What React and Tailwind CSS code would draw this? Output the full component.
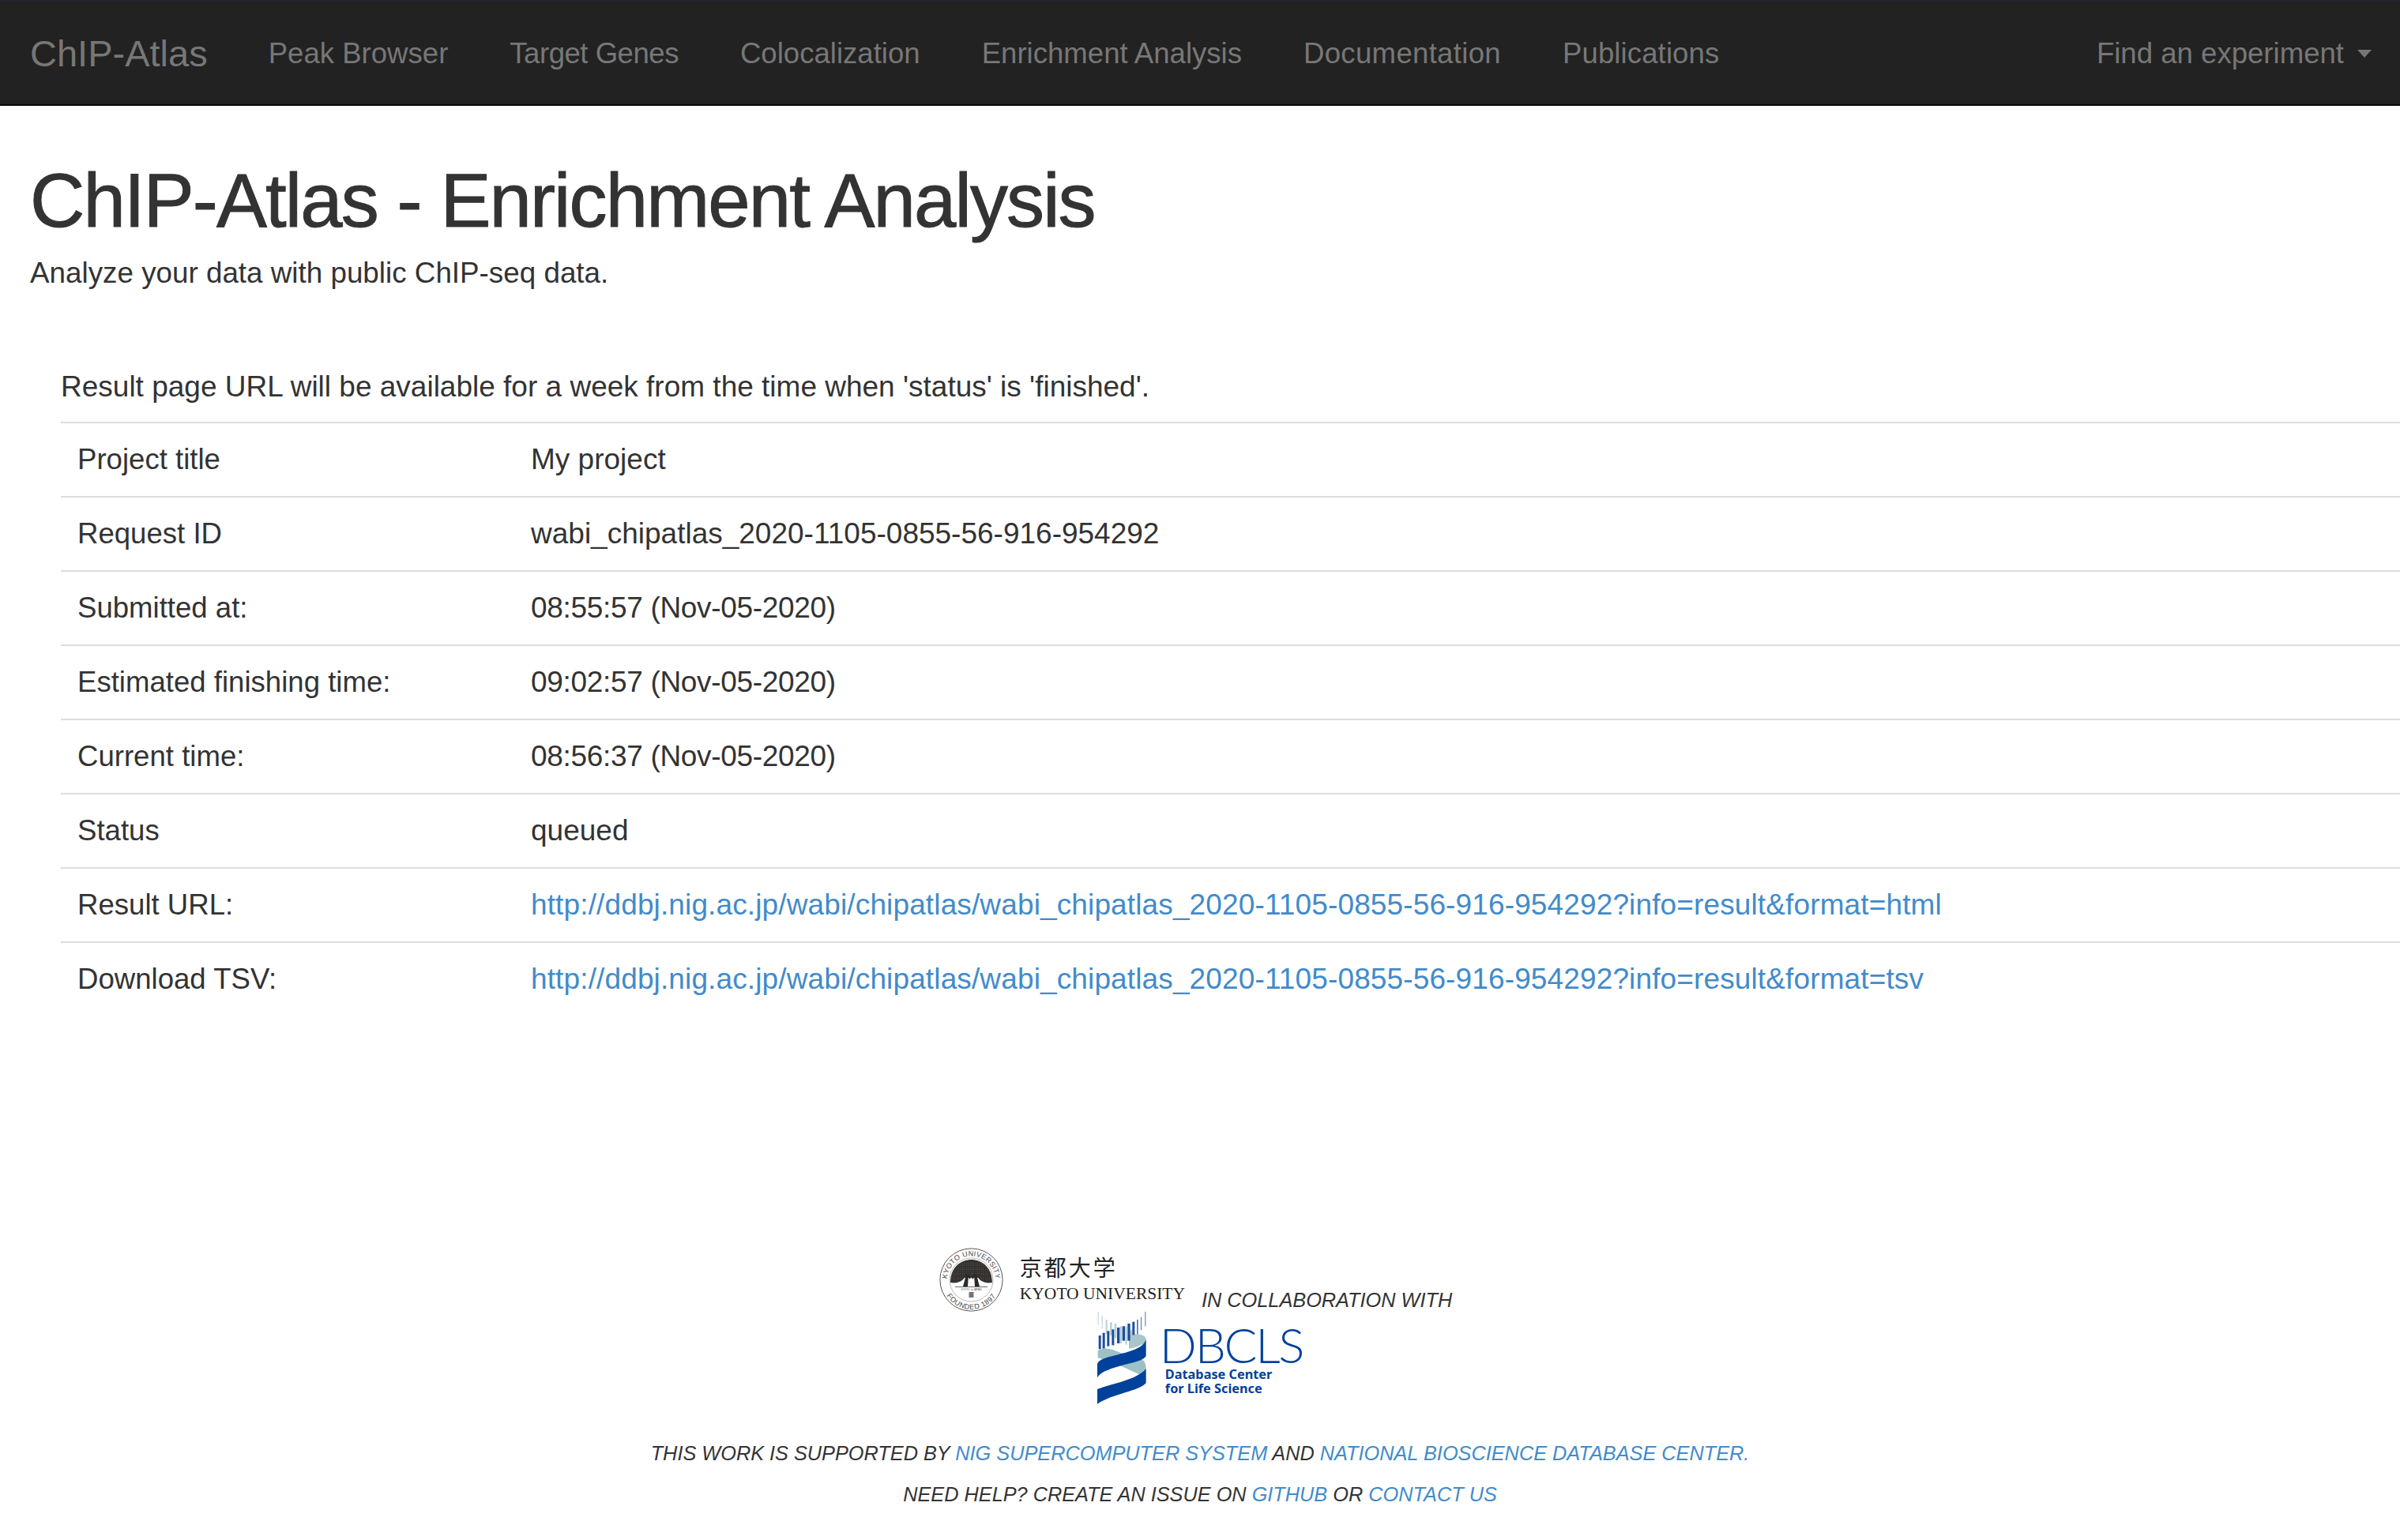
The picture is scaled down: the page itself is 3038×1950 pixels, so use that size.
const rows = [
  ["Project title", "My project"],
  ["Request ID", "wabi_chipatlas_2020-1105-0855-56-916-954292"],
  ["Submitted at:", "08:55:57 (Nov-05-2020)", "time"],
  ["Estimated finishing time:", "09:02:57 (Nov-05-2020)", "time"],
  ["Current time:", "08:56:37 (Nov-05-2020)", "time"],
  ["Status", "queued"],
  ["Result URL:", "http://ddbj.nig.ac.jp/wabi/chipatlas/wabi_chipatlas_2020-1105-0855-56-916-954292?info=result&format=html", "link"],
  ["Download TSV:", "http://ddbj.nig.ac.jp/wabi/chipatlas/wabi_chipatlas_2020-1105-0855-56-916-954292?info=result&format=tsv", "link"],
];
const navs = [
  ["Peak Browser", ""],
  ["Target Genes", "tracking-[-0.5px]"],
  ["Colocalization", ""],
  ["Enrichment Analysis", ""],
  ["Documentation", "tracking-[0.3px]"],
  ["Publications", "tracking-[0.1px]"],
];

function Seal() {
  const dots = [];
  for (let y = 18; y < 44; y += 2.4) {
    for (let x = 15; x < 67; x += 2.4) {
      dots.push(<circle key={x + "-" + y} cx={x} cy={y} r="0.3" fill="#b5b0ad" />);
    }
  }
  return (
    <svg width="81" height="81" viewBox="0 0 81 81" className="shrink-0">
      <defs>
        <path id="sealTop" d="M14 56 A30.5 30.5 0 1 1 67 56" />
        <path id="sealBot" d="M4 44 A36.6 36.6 0 0 0 77 44" />
        <clipPath id="dome"><path d="M14 44 C14 24 28 15 40.5 15 C53 15 67 24 67 44 Q55 46 49 38 L32 38 Q26 46 14 44Z" /></clipPath>
      </defs>
      <circle cx="40.5" cy="40.5" r="39.6" fill="none" stroke="#555" strokeWidth="1" />
      <circle cx="40.5" cy="40.5" r="27.5" fill="none" stroke="#888" strokeWidth="0.6" />
      <text fontSize="9" fill="#444" letterSpacing="0.3" fontFamily="Liberation Sans, sans-serif"><textPath href="#sealTop" startOffset="50%" textAnchor="middle">KYOTO UNIVERSITY</textPath></text>
      <text fontSize="9" fill="#444" letterSpacing="0.6" fontFamily="Liberation Sans, sans-serif"><textPath href="#sealBot" startOffset="50%" textAnchor="middle">FOUNDED 1897</textPath></text>
      <path d="M14 44 C14 24 28 15 40.5 15 C53 15 67 24 67 44 Q55 46 49 38 L32 38 Q26 46 14 44Z" fill="#33302e" />
      <g clipPath="url(#dome)">{dots}</g>
      <path d="M30 49 L34 34 L37 34 L36 49Z M45 49 L44 34 L47 34 L51 49Z M36 30 L40 38 L38 40Z M45 30 L41 38 L43 40Z" fill="#2a2a2a" />
      <rect x="20" y="49" width="41" height="0.8" fill="#444" />
      <text x="40.5" y="54" fontSize="3.2" fill="#444" textAnchor="middle" fontFamily="Liberation Sans, sans-serif">KYOTO 京 JAPAN</text>
      <rect x="37.5" y="56" width="6" height="7" fill="#777" />
    </svg>
  );
}

function Helix() {
  const pale = [[32,3,30,50],[47,3,45,50],[62,6,60,55],[78,8,70,50],[95,8,75,55],[116,7,85,65],[136,7,85,70],[155,8,100,60]];
  const dark = [[35,9,120,52],[50,9,110,60],[67,9,103,58],[85,9,97,60],[105,10,90,60],[125,10,85,55],[145,10,75,65],[163,9,68,50],[180,5,60,55],[195,3,50,50],[211,3,30,55]];
  return (
    <svg width="62" height="117" viewBox="30 30 186 351" className="shrink-0">
      {pale.map(([x, w, y, h]) => <rect key={x} x={x} y={y} width={w} height={h} fill="#b9d0d4" />)}
      <path d="M150 118 Q200 108 215 130 L215 145 Q190 165 150 170Z" fill="#a9c7cb" />
      {dark.map(([x, w, y, h]) => <rect key={x} x={x} y={y} width={w} height={h} fill={w < 6 ? "#4a74b4" : "#1c4f9c"} />)}
      <path d="M32 178 C60 160 90 175 130 190 C160 200 195 205 208 218 Q215 228 215 245 L190 268 C150 250 100 225 32 205Z" fill="#9dc1c5" />
      <path d="M30 228 C35 212 60 205 100 195 C150 182 205 170 215 135 L215 198 C205 215 170 222 130 232 C90 244 45 255 30 280Z" fill="#00419b" />
      <path d="M30 324 C90 300 180 290 215 245 L215 300 C190 332 90 340 30 380Z" fill="#00419b" />
    </svg>
  );
}

export default function App() {
  return (
    <div className="min-h-[1950px] bg-white text-[#333] font-['Liberation_Sans',sans-serif] text-[37px] leading-[52px]">
      <nav className="h-[134px] bg-[#222] border-t-2 border-t-[#24242a] border-b-2 border-b-[#080808] flex items-center pl-[38px] pr-[36px] pt-[1px] text-[#777] text-[36.6px]">
        <span className="text-[47px] mr-[77px]">ChIP-Atlas</span>
        <div className="flex gap-[78px]">
          {navs.map(([n, c]) => <span key={n} className={c}>{n}</span>)}
        </div>
        <div className="ml-auto flex items-center gap-[17px]">
          <span>Find an experiment</span>
          <span className="w-0 h-0 border-x-[9px] border-x-transparent border-t-[10px] border-t-[#777]"></span>
        </div>
      </nav>

      <header className="pl-[38px] pt-[68px]">
        <h1 className="text-[96px] leading-[104px] font-normal tracking-[-1.9px] [-webkit-text-stroke:1px_#333]">ChIP-Atlas - Enrichment Analysis</h1>
        <p className="mt-[14px] text-[36.8px]">Analyze your data with public ChIP-seq data.</p>
      </header>

      <main className="pl-[77px] pt-[92px] overflow-hidden">
        <p className="mb-[18px]">Result page URL will be available for a week from the time when 'status' is 'finished'.</p>
        <table className="w-full border-collapse border-t-2 border-[#ddd]">
          <tbody>
            {rows.map(([k, v, kind], i) => (
              <tr key={k} className={i === 7 ? "" : "border-b-2 border-[#ddd]"}>
                <td className="w-[595px] pl-[21px] py-[20px] text-[36.6px]">{k}</td>
                <td className="py-[20px]">
                  {kind === "link" ? (
                    <a className="text-[#428bca] tracking-[0.13px]">{v}</a>
                  ) : kind === "time" ? (
                    <span className="tracking-[-0.32px]">{v}</span>
                  ) : (
                    v
                  )}
                </td>
              </tr>
            ))}
          </tbody>
        </table>
      </main>

      <footer className="pt-[294px] text-center">
        <div className="flex justify-center items-end pr-[11px]">
          <Seal />
          <div className="ml-[21px] text-left font-['Liberation_Serif',serif] text-[#222] mb-[13px]">
            <div className="text-[28px] leading-[28px] font-['Noto_Sans_CJK_JP',serif] tracking-[3px]">京都大学</div>
            <div className="mt-[10px] text-[21.5px] leading-[20px] whitespace-nowrap">KYOTO UNIVERSITY</div>
          </div>
          <i className="ml-[21px] text-[25.3px] leading-[30px]">IN COLLABORATION WITH</i>
        </div>
        <div className="flex justify-center">
          <Helix />
          <div className="ml-[17px] text-left text-[#00419b] pt-[16px]">
            <div className="font-['Lato',sans-serif] font-light text-[62px] leading-[50px] tracking-[-2.3px]">DBCLS</div>
            <div className="mt-[4px] pl-[7px] font-['Noto_Sans',sans-serif] font-bold text-[16.3px] leading-[18px]">Database Center<br />for Life Science</div>
          </div>
        </div>
        <div className="mt-[36px] italic text-[25.3px] leading-[52px]">
          <p>THIS WORK IS SUPPORTED BY <a className="text-[#428bca]">NIG SUPERCOMPUTER SYSTEM</a> AND <a className="text-[#428bca]">NATIONAL BIOSCIENCE DATABASE CENTER.</a></p>
          <p>NEED HELP? CREATE AN ISSUE ON <a className="text-[#428bca]">GITHUB</a> OR <a className="text-[#428bca]">CONTACT US</a></p>
        </div>
      </footer>
    </div>
  );
}
